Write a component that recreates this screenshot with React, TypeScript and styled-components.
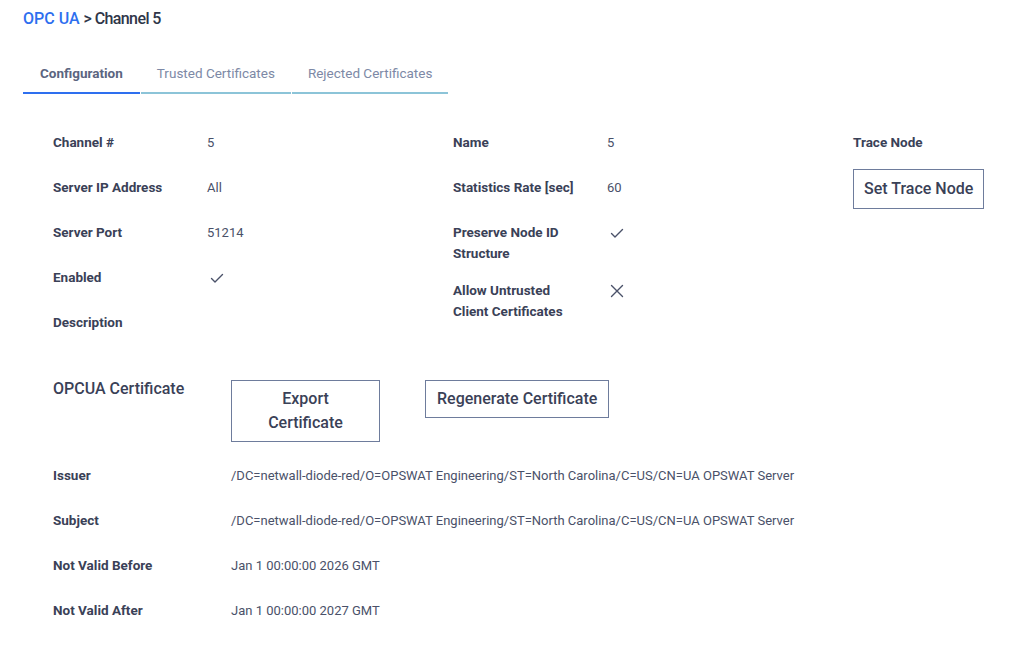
import React from "react";
import styled, { createGlobalStyle } from "styled-components";

const GlobalStyle = createGlobalStyle`
  html, body {
    margin: 0;
    padding: 0;
    background: #ffffff;
  }
  body {
    font-family: Roboto, "Liberation Sans", Arial, sans-serif;
    color: #3a4157;
    -webkit-font-smoothing: antialiased;
  }
  * {
    box-sizing: border-box;
  }
`;

const Page = styled.div`
  padding: 9px 23px 24px;
`;

const Breadcrumb = styled.div`
  font-size: 16px;
  line-height: 20px;
  font-weight: 500;
  color: #2f3649;
  a {
    color: #2e6fef;
    text-decoration: none;
  }
`;

const Current = styled.span`
  letter-spacing: -0.6px;
`;

const TabBar = styled.div`
  display: flex;
  gap: 1px;
  margin-top: 34px;
`;

const Tab = styled.div<{ $active?: boolean }>`
  padding: 0 ${(p) => (p.$active ? 17 : 16)}px 9px;
  font-size: 13.5px;
  line-height: 20px;
  font-weight: ${(p) => (p.$active ? 700 : 400)};
  color: ${(p) => (p.$active ? "#5b6580" : "#7d89a6")};
  border-bottom: 2px solid ${(p) => (p.$active ? "#2e6fef" : "#8cc4d8")};
`;

const Content = styled.div`
  padding: 38px 0 0 30px;
`;

const Columns = styled.div`
  display: grid;
  grid-template-columns: 400px 400px 1fr;
`;

const Column = styled.div`
  display: flex;
  flex-direction: column;
`;

const FieldRow = styled.div<{ $labelWidth?: number }>`
  display: grid;
  grid-template-columns: ${(p) => p.$labelWidth ?? 154}px 1fr;
  min-height: 45px;
  padding-bottom: 16px;
  font-size: 13px;
  line-height: 21px;
`;

const Label = styled.div`
  font-size: 13.5px;
  font-weight: 700;
  color: #3a4157;
  max-width: 130px;
`;

const Value = styled.div`
  color: #4a5169;
  white-space: nowrap;
`;

const IconValue = styled.div`
  display: flex;
  align-items: center;
  height: 21px;
  padding-left: 2px;
  color: #4a5169;
`;

const TraceLabel = styled.div`
  font-size: 13.5px;
  line-height: 21px;
  font-weight: 700;
  color: #3a4157;
  margin-bottom: 16px;
`;

const OutlineButton = styled.button<{ $width?: number; $pad?: string }>`
  font-family: inherit;
  font-size: 16px;
  line-height: 24px;
  font-weight: 500;
  color: #3a4157;
  background: #ffffff;
  border: 1px solid #6e7c9c;
  border-radius: 0;
  padding: ${(p) => p.$pad ?? "6px 11px"};
  width: ${(p) => (p.$width ? `${p.$width}px` : "auto")};
  align-self: flex-start;
  cursor: pointer;
  text-align: center;
`;

const CertSection = styled.div`
  display: flex;
  align-items: flex-start;
  margin-top: 23px;
`;

const CertTitle = styled.div`
  width: 178px;
  font-size: 16px;
  line-height: 17px;
  font-weight: 500;
  color: #3a4157;
`;

const CertActions = styled.div`
  display: flex;
  align-items: flex-start;
  gap: 45px;
`;

const CertDetails = styled.div`
  margin-top: 11px;
  padding-top: 12px;
`;

const CheckIcon = () => (
  <svg width="16" height="16" viewBox="0 0 16 16" fill="none">
    <path d="M2.5 8.5 L6 12 L13.5 4.5" stroke="currentColor" strokeWidth="1.4" strokeLinecap="round" strokeLinejoin="round" />
  </svg>
);

const CrossIcon = () => (
  <svg width="16" height="16" viewBox="0 0 16 16" fill="none">
    <path d="M2.5 2.5 L13.5 13.5 M13.5 2.5 L2.5 13.5" stroke="currentColor" strokeWidth="1.4" strokeLinecap="round" />
  </svg>
);

const subject = "/DC=netwall-diode-red/O=OPSWAT Engineering/ST=North Carolina/C=US/CN=UA OPSWAT Server";

const certRows = [
  { label: "Issuer", value: subject },
  { label: "Subject", value: subject },
  { label: "Not Valid Before", value: "Jan 1 00:00:00 2026 GMT" },
  { label: "Not Valid After", value: "Jan 1 00:00:00 2027 GMT" },
];

const App: React.FC = () => {
  return (
    <>
      <GlobalStyle />
      <Page>
        <Breadcrumb>
          <a href="#">OPC UA</a> <Current>&gt; Channel 5</Current>
        </Breadcrumb>
        <TabBar>
          <Tab $active>Configuration</Tab>
          <Tab>Trusted Certificates</Tab>
          <Tab>Rejected Certificates</Tab>
        </TabBar>
        <Content>
          <Columns>
            <Column>
              <FieldRow>
                <Label>Channel #</Label>
                <Value>5</Value>
              </FieldRow>
              <FieldRow>
                <Label>Server IP Address</Label>
                <Value>All</Value>
              </FieldRow>
              <FieldRow>
                <Label>Server Port</Label>
                <Value>51214</Value>
              </FieldRow>
              <FieldRow>
                <Label>Enabled</Label>
                <IconValue>
                  <CheckIcon />
                </IconValue>
              </FieldRow>
              <FieldRow>
                <Label>Description</Label>
                <Value />
              </FieldRow>
            </Column>
            <Column>
              <FieldRow>
                <Label>Name</Label>
                <Value>5</Value>
              </FieldRow>
              <FieldRow>
                <Label>Statistics Rate [sec]</Label>
                <Value>60</Value>
              </FieldRow>
              <FieldRow>
                <Label>Preserve Node ID Structure</Label>
                <IconValue>
                  <CheckIcon />
                </IconValue>
              </FieldRow>
              <FieldRow>
                <Label>Allow Untrusted Client Certificates</Label>
                <IconValue>
                  <CrossIcon />
                </IconValue>
              </FieldRow>
            </Column>
            <Column>
              <TraceLabel>Trace Node</TraceLabel>
              <OutlineButton $pad="7px 10px">Set Trace Node</OutlineButton>
            </Column>
          </Columns>
          <CertSection>
            <CertTitle>OPCUA Certificate</CertTitle>
            <CertActions>
              <OutlineButton $width={149}>Export Certificate</OutlineButton>
              <OutlineButton>Regenerate Certificate</OutlineButton>
            </CertActions>
          </CertSection>
          <CertDetails>
            {certRows.map((row) => (
              <FieldRow key={row.label} $labelWidth={178}>
                <Label>{row.label}</Label>
                <Value>{row.value}</Value>
              </FieldRow>
            ))}
          </CertDetails>
        </Content>
      </Page>
    </>
  );
};

export default App;
